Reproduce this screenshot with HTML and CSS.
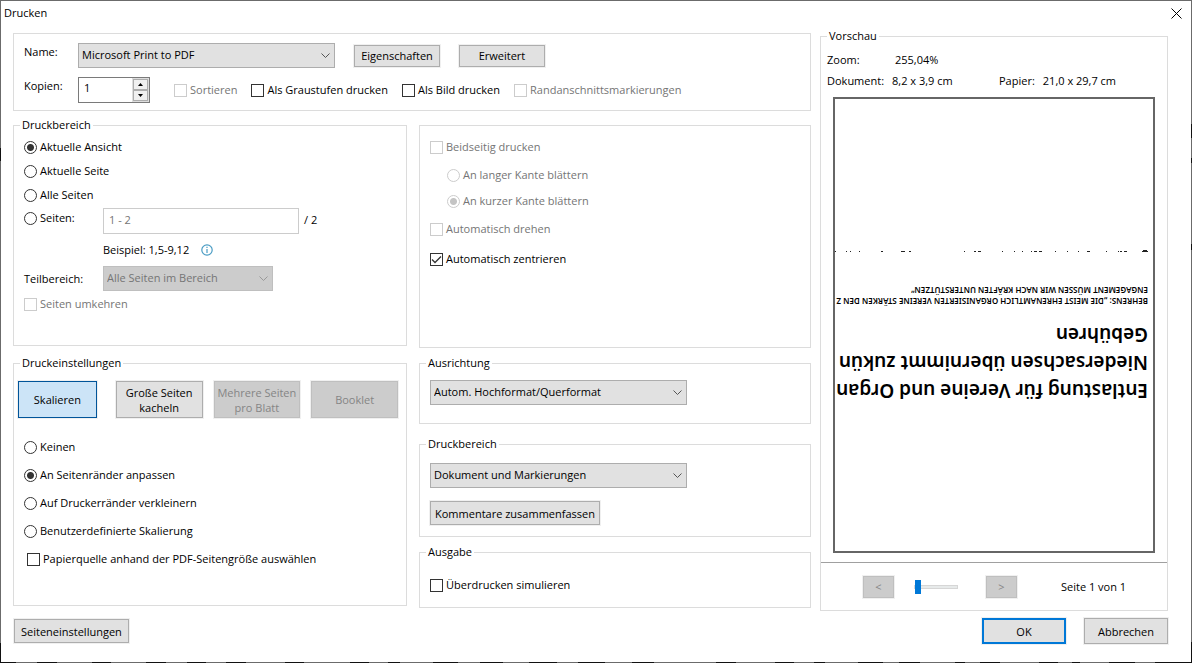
FILE: index.html
```html
<!DOCTYPE html>
<html lang="de">
<head>
<meta charset="utf-8">
<title>Drucken</title>
<link rel="stylesheet" href="styles.css">
</head>
<body>
<form class="dialog">
  <header class="titlebar">
    <h1 class="title">Drucken</h1>
    <button type="button" class="close" aria-label="Schließen">
      <svg width="11" height="11" viewBox="0 0 11 11"><path d="M.5 .5l10 10M10.5 .5l-10 10" stroke="#000" fill="none"/></svg>
    </button>
  </header>

  <main class="body">
    <div class="settings">
      <fieldset class="group printer">
        <div class="row printer-row">
          <label class="caption" for="printer">Name:</label>
          <select class="select wide" id="printer"><option>Microsoft Print to PDF</option></select>
          <button type="button" class="button small">Eigenschaften</button>
          <button type="button" class="button small">Erweitert</button>
        </div>
        <div class="row copies-row">
          <label class="caption" for="copies">Kopien:</label>
          <span class="spinner">
            <input class="spinner-input" id="copies" type="text" value="1">
            <span class="spinner-buttons">
              <button type="button" class="spin" aria-label="Mehr"><svg width="5" height="3" viewBox="0 0 5 3"><path d="M0 3L2.5 0L5 3z"/></svg></button>
              <button type="button" class="spin" aria-label="Weniger"><svg width="5" height="3" viewBox="0 0 5 3"><path d="M0 0L2.5 3L5 0z"/></svg></button>
            </span>
          </span>
          <div class="flags">
            <label class="option disabled"><input type="checkbox" disabled>Sortieren</label>
            <label class="option"><input type="checkbox">Als Graustufen drucken</label>
            <label class="option"><input type="checkbox">Als Bild drucken</label>
            <label class="option disabled"><input type="checkbox" disabled>Randanschnittsmarkierungen</label>
          </div>
        </div>
      </fieldset>

      <div class="column">
        <fieldset class="group range">
          <legend>Druckbereich</legend>
          <label class="option r24"><input type="radio" name="range" checked>Aktuelle Ansicht</label>
          <label class="option r24"><input type="radio" name="range">Aktuelle Seite</label>
          <label class="option r24"><input type="radio" name="range">Alle Seiten</label>
          <div class="row pages-row">
            <label class="option lead"><input type="radio" name="range">Seiten:</label>
            <input class="textbox" type="text" value="1 - 2" aria-label="Seiten">
            <span class="total">/ 2</span>
          </div>
          <div class="row example">
            <span>Beispiel: 1,5-9,12</span>
            <svg width="12" height="12" viewBox="0 0 12 12"><circle cx="6" cy="6" r="5.2" fill="none" stroke="#4a9cc4" stroke-width="1.2"/><path d="M6 5v4M6 2.8v1.2" stroke="#4a9cc4" stroke-width="1.2"/></svg>
          </div>
          <div class="row">
            <label class="lead" for="subset">Teilbereich:</label>
            <select class="select subset" id="subset" disabled><option>Alle Seiten im Bereich</option></select>
          </div>
          <label class="option disabled reverse r24"><input type="checkbox" disabled>Seiten umkehren</label>
        </fieldset>

        <fieldset class="group scaling">
          <legend>Druckeinstellungen</legend>
          <div class="modes">
            <button type="button" class="button active">Skalieren</button>
            <button type="button" class="button">Große Seiten kacheln</button>
            <button type="button" class="button" disabled>Mehrere Seiten pro Blatt</button>
            <button type="button" class="button" disabled>Booklet</button>
          </div>
          <div class="scale-options">
            <label class="option r28"><input type="radio" name="scale">Keinen</label>
            <label class="option r28"><input type="radio" name="scale" checked>An Seitenränder anpassen</label>
            <label class="option r28"><input type="radio" name="scale">Auf Druckerränder verkleinern</label>
            <label class="option r28"><input type="radio" name="scale">Benutzerdefinierte Skalierung</label>
            <label class="option r28 source"><input type="checkbox">Papierquelle anhand der PDF-Seitengröße auswählen</label>
          </div>
        </fieldset>
      </div>

      <div class="column">
        <fieldset class="group duplex">
          <label class="option disabled r28"><input type="checkbox" disabled>Beidseitig drucken</label>
          <div class="edges">
            <label class="option disabled r24"><input type="radio" name="edge" disabled>An langer Kante blättern</label>
            <label class="option disabled r24"><input type="radio" name="edge" disabled checked>An kurzer Kante blättern</label>
          </div>
          <label class="option disabled r28"><input type="checkbox" disabled>Automatisch drehen</label>
          <label class="option r28"><input type="checkbox" checked>Automatisch zentrieren</label>
        </fieldset>

        <fieldset class="group orientation">
          <legend>Ausrichtung</legend>
          <select class="select wide" aria-label="Ausrichtung"><option>Autom. Hochformat/Querformat</option></select>
        </fieldset>

        <fieldset class="group content">
          <legend>Druckbereich</legend>
          <select class="select wide" aria-label="Druckbereich"><option>Dokument und Markierungen</option></select>
          <button type="button" class="button summary">Kommentare zusammenfassen</button>
        </fieldset>

        <fieldset class="group output">
          <legend>Ausgabe</legend>
          <label class="option r28"><input type="checkbox">Überdrucken simulieren</label>
        </fieldset>
      </div>
    </div>

    <fieldset class="group preview">
      <legend>Vorschau</legend>
      <dl class="facts">
        <div class="fact zoom"><dt>Zoom:</dt><dd>255,04%</dd></div>
        <div class="fact"><dt>Dokument:</dt><dd>8,2 x 3,9 cm</dd></div>
        <div class="fact"><dt>Papier:</dt><dd>21,0 x 29,7 cm</dd></div>
      </dl>
      <div class="sheet">
        <div class="page">
          <p class="headline">Entlastung für Vereine und Organ<br>Niedersachsen übernimmt zukün<br>Gebühren</p>
          <p class="subline">BEHRENS: „DIE MEIST EHRENAMTLICH ORGANISIERTEN VEREINE STÄRKEN DEN Z<br>ENGAGEMENT MÜSSEN WIR NACH KRÄFTEN UNTERSTÜTZEN“</p>
          <svg class="cutline" width="314" height="2" viewBox="0 0 314 2"><path d="M0 .5h6M1 1.5h4M21 .5h3M26 .5h2M29 .5h1M41 .5h1M58 .5h3M69 .5h1M80 .5h1M92 .5h1M106 .5h3M111 .5h3M116 .5h1M125 .5h1M133 .5h1M145 .5h1M167 .5h3M172 .5h2M183 .5h1M237 .5h2M243 .5h4M265 .5h2M288 .5h1M297 .5h1M301 .5h1M312 .5h1" stroke="#222"/></svg>
        </div>
      </div>
      <div class="pager">
        <button type="button" class="button step" disabled>&lt;</button>
        <input class="slider" type="range" min="1" max="2" value="1" aria-label="Seite">
        <button type="button" class="button step" disabled>&gt;</button>
        <span class="position">Seite 1 von 1</span>
      </div>
    </fieldset>
  </main>

  <footer class="footer">
    <button type="button" class="button setup">Seiteneinstellungen</button>
    <button type="submit" class="button action default">OK</button>
    <button type="button" class="button action">Abbrechen</button>
  </footer>

  <svg class="edge" viewBox="0 0 1192 1" preserveAspectRatio="none" aria-hidden="true"><path d="M0 .5H16M37 .5H57M92 .5H111M146 .5H166M187 .5H206M226 .5H246M285 .5H304M350 .5H369M388 .5H400M433 .5H458M480 .5H503M529 .5H557M578 .5H605M632 .5H654M716 .5H736M775 .5H794M814 .5H825M858 .5H883M899 .5H920M955 .5H965M980 .5H1000M1039 .5H1058M1072 .5H1080M1109 .5H1135M1155 .5H1192" stroke="#111"/></svg>
</form>
</body>
</html>
```
FILE: styles.css
```css
* { box-sizing: border-box; }

body {
  margin: 0;
  background: #fff;
  color: #000;
  font: 11px/16px "Open Sans", "Noto Sans", sans-serif;
}

button, input, select { font: inherit; color: inherit; }

.dialog {
  display: flex;
  flex-direction: column;
  min-height: 100vh;
  border-top: 1px solid #6b6b6b;
  padding: 0 24px 0 13px;
  background:
    linear-gradient(#6b6b6b 147px, #111 147px 160px, #6b6b6b 160px calc(100% - 20px), #111 calc(100% - 20px)) left / 1px 100% no-repeat,
    linear-gradient(#6b6b6b 123px, #111 123px 137px, #6b6b6b 137px 157px, #111 157px 162px, #6b6b6b 162px 243px, #111 243px 249px, #6b6b6b 249px calc(100% - 21px), #111 calc(100% - 21px)) right / 1px 100% no-repeat;
}
.edge {
  display: block;
  width: auto;
  height: 1px;
  margin: auto -24px 0 -13px;
  background: #6b6b6b;
}

.titlebar {
  display: flex;
  justify-content: space-between;
  align-items: center;
  height: 24px;
  margin: 0 -14px 0 -9px;
}
.title { margin: 0; font-size: 11px; font-weight: 400; }
.close { display: flex; padding: 0; border: 0; background: none; }

.body {
  display: grid;
  grid-template-columns: 798fr 348fr;
  gap: 9px;
  padding-top: 2px;
}
.settings {
  display: grid;
  grid-template-columns: 394fr 392fr;
  column-gap: 12px;
  row-gap: 6px;
  align-content: start;
  padding-top: 6px;
}
.column { display: flex; flex-direction: column; }

.group {
  min-width: 0;
  margin: 0;
  border: 1px solid #dcdcdc;
  padding: 0 10px;
}
.group legend { padding: 0 2px; line-height: 16px; margin-left: -4px; }

.row { display: flex; align-items: center; }
.option { display: flex; align-items: center; gap: 3px; white-space: nowrap; }
.r24 { height: 24px; }
.r28 { height: 28px; }
.disabled { color: #757575; }

input[type="checkbox"], input[type="radio"] {
  appearance: none;
  flex: none;
  width: 13px;
  height: 13px;
  margin: 0;
  border: 1px solid #333;
  background: #fff;
}
input[type="radio"] { border-radius: 50%; }
input[type="radio"]:checked { background: radial-gradient(circle, #333 3px, #fff 4px); }
input[type="checkbox"]:checked {
  background: url("data:image/svg+xml,%3Csvg xmlns='http://www.w3.org/2000/svg' viewBox='0 0 11 11'%3E%3Cpath d='M1 5.5L4 8.500L10 2.500' fill='none' stroke='%23333' stroke-width='1.300'/%3E%3C/svg%3E");
}
input[type="checkbox"]:disabled, input[type="radio"]:disabled { border-color: #ccc; }
input[type="radio"]:disabled:checked { background: radial-gradient(circle, #c4c4c4 3px, #fff 4px); }

.select {
  appearance: none;
  display: block;
  height: 25px;
  border: 1px solid #adadad;
  border-radius: 0;
  padding: 0 20px 1px 3px;
  background: #e1e1e1 url("data:image/svg+xml,%3Csvg xmlns='http://www.w3.org/2000/svg' width='9' height='5' viewBox='0 0 9 5'%3E%3Cpath d='M.5 .5L4.500 4.500L8.500 .5' fill='none' stroke='%23555'/%3E%3C/svg%3E") no-repeat right 4px center;
}
.select:disabled {
  border-color: #bfbfbf;
  background-color: #ccc;
  color: #757575;
  opacity: 1;
  background-image: url("data:image/svg+xml,%3Csvg xmlns='http://www.w3.org/2000/svg' width='9' height='5' viewBox='0 0 9 5'%3E%3Cpath d='M.5 .5L4.500 4.500L8.500 .5' fill='none' stroke='%23999'/%3E%3C/svg%3E");
}
.wide { width: 257px; }

.button {
  border: 1px solid #adadad;
  border-radius: 0;
  padding: 0 4px;
  background: #e1e1e1;
  box-shadow: 0 0 0 1px #f0f0f0;
  line-height: 15px;
}
.button:disabled { border-color: #bfbfbf; background: #ccc; color: #858585; }
.button.active { border-color: #005499; background: #cce4f7; }

.printer { grid-column: 1 / -1; padding: 9px 10px 7px; }
.caption { width: 54px; align-self: flex-start; line-height: 18px; }
.printer-row .button { width: 86px; height: 22px; margin-left: 19px; }
.copies-row { margin-top: 9px; }
.spinner {
  display: flex;
  width: 72px;
  height: 26px;
  border: 1px solid #7a7a7a;
}
.spinner-input { flex: 1; min-width: 0; border: 0; padding: 0 5px 4px; background: none; outline: 0; }
.spinner-buttons { display: grid; width: 17px; background: #ddd; padding: 1px; }
.spin {
  display: flex;
  align-items: center;
  justify-content: center;
  border: 1px solid #adadad;
  padding: 0;
  background: #f0f0f0;
}
.flags { display: flex; gap: 14px; margin-left: 24px; }

.range { padding-top: 2px; padding-bottom: 29px; margin-bottom: 9px; }
.reverse { margin-top: 1px; }
.lead { width: 79px; flex: none; }
.pages-row { margin-top: 1px; align-items: flex-start; }
.pages-row .option { height: 20px; }
.textbox {
  width: 196px;
  height: 26px;
  border: 1px solid #ccc;
  padding: 0 5px 4px;
  color: #757575;
}
.total { margin-left: 5px; line-height: 24px; }
.example { height: 32px; padding-left: 79px; gap: 12px; }
.subset { width: 170px; }

.scaling { padding-bottom: 32px; }
.modes {
  display: grid;
  grid-template-columns: repeat(4, 1fr);
  gap: 11px;
  margin: 10px -2px 15px -6px;
}
.modes .button { height: 37px; padding: 0; }
.modes .active { margin-right: 8px; }
.source { margin-left: 3px; }

.duplex { margin: 8px 0 7px; padding-top: 7px; padding-bottom: 74px; }
.edges { display: grid; gap: 2px; margin: 2px 0 2px 17px; }
.duplex > .option + .option { margin-top: 2px; }
.orientation { padding-top: 9px; padding-bottom: 18px; margin-bottom: 12px; }
.content { padding-top: 11px; padding-bottom: 11px; margin-bottom: 7px; }
.summary { display: block; height: 24px; margin-top: 13px; }
.output { padding-top: 11px; padding-bottom: 8px; }

.preview { display: flex; flex-direction: column; margin-top: 1px; padding: 0; }
.preview legend { margin-left: 6px; }
.facts { display: grid; grid-template-columns: 172px 1fr; row-gap: 5px; margin: 8px 0 8px 6px; }
.fact { display: flex; gap: 8px; white-space: nowrap; }
.zoom { grid-column: 1 / -1; }
.zoom dt { width: 60px; }
.fact dd { margin: 0; }
.sheet {
  height: 456px;
  margin: 0 12px;
  border: 2px solid #666;
  overflow: hidden;
}
.page { height: 100%; padding: 146px 0 0 5px; transform: rotate(180deg); overflow: hidden; white-space: nowrap; }
.headline { margin: 0; font: 600 19px/28px "Noto Sans", sans-serif; }
.subline { margin: 14px 0 0; font: 600 8px/11px "Noto Sans", sans-serif; }
.cutline { display: block; margin-top: 33px; }

.pager {
  display: flex;
  align-items: center;
  height: 48px;
  margin-top: 9px;
  border-top: 1px solid #a0a0a0;
  padding-left: 42px;
}
.step { width: 31px; height: 22px; }
.slider { appearance: none; width: 44px; height: 14px; margin: 0 28px 0 20px; background: none; }
.slider::-webkit-slider-runnable-track { height: 4px; border: 1px solid #d6d6d6; background: #e7eaea; }
.slider::-webkit-slider-thumb { appearance: none; width: 6px; height: 14px; margin-top: -6px; background: #0078d7; }
.position { margin-left: 44px; }

.footer { display: flex; align-items: center; gap: 18px; padding: 7px 0 16px 1px; }
.setup { height: 24px; margin-right: auto; padding: 0 6px; }
.action { width: 84px; height: 26px; }
.default { border: 2px solid #0078d7; }
```
